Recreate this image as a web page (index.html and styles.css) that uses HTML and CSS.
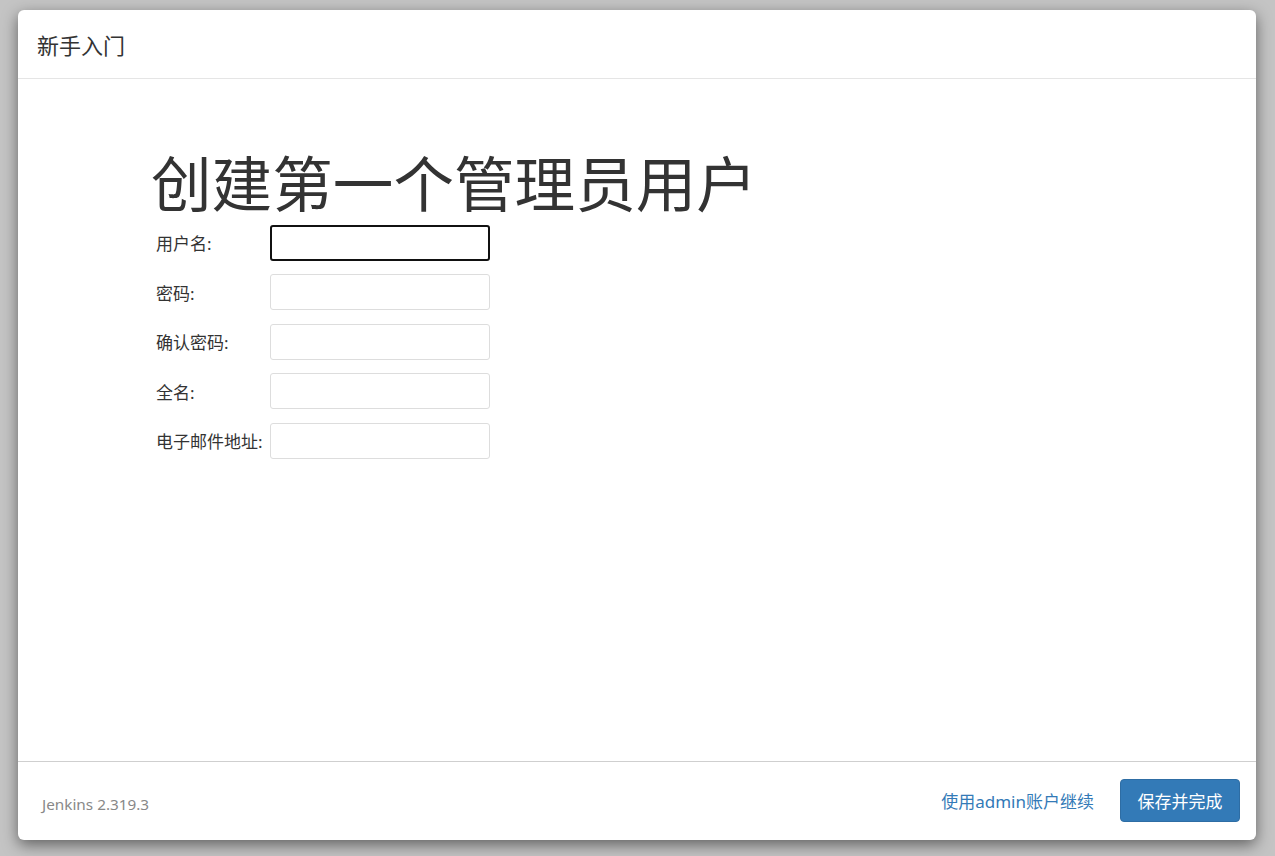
FILE: index.html
```html
<!DOCTYPE html>
<html lang="zh-CN">
<head>
    <meta charset="UTF-8">
    <title>新手入门</title>
    <link rel="stylesheet" href="styles.css">
</head>
<body>
    <div class="setup-modal">
        <div class="setup-header">
            <h4 class="setup-title">新手入门</h4>
        </div>

        <div class="setup-body">
            <h1 class="setup-heading">创建第一个管理员用户</h1>
            <form class="setup-form">
                <div class="form-row">
                    <label class="form-label">用户名:</label>
                    <input class="form-input focused" type="text">
                </div>
                <div class="form-row">
                    <label class="form-label">密码:</label>
                    <input class="form-input" type="password">
                </div>
                <div class="form-row">
                    <label class="form-label">确认密码:</label>
                    <input class="form-input" type="password">
                </div>
                <div class="form-row">
                    <label class="form-label">全名:</label>
                    <input class="form-input" type="text">
                </div>
                <div class="form-row">
                    <label class="form-label">电子邮件地址:</label>
                    <input class="form-input" type="text">
                </div>
            </form>
        </div>

        <div class="setup-footer">
            <div class="version">Jenkins 2.319.3</div>
            <div class="footer-actions">
                <a class="skip-link" href="#">使用admin账户继续</a>
                <button class="save-btn" type="button">保存并完成</button>
            </div>
        </div>
    </div>
</body>
</html>
```

FILE: styles.css
```css
* {
    box-sizing: border-box;
    margin: 0;
    padding: 0;
}

html, body {
    height: 100%;
}

body {
    background: #c4c4c4;
    font-family: "Noto Sans", "Noto Sans CJK SC", sans-serif;
    color: #333;
    padding: 10px 19px 16px 18px;
}

.setup-modal {
    height: 100%;
    background: #fff;
    border-radius: 6px;
    box-shadow: 0 5px 15px rgba(0, 0, 0, 0.5);
    display: flex;
    flex-direction: column;
}

/* Header */
.setup-header {
    height: 69px;
    border-bottom: 1px solid #e5e5e5;
    padding-left: 19px;
    display: flex;
    align-items: center;
}

.setup-title {
    font-size: 22px;
    font-weight: 400;
    color: #333;
}

/* Body */
.setup-body {
    flex: 1;
    padding: 72px 0 0 133px;
}

.setup-heading {
    font-size: 60.6px;
    font-weight: 400;
    line-height: 1.1;
    color: #333;
    margin-bottom: 7px;
}

.setup-form {
    margin-left: 5px;
    display: flex;
    flex-direction: column;
    gap: 13.5px;
}

.form-row {
    display: flex;
    align-items: center;
}

.form-label {
    width: 114px;
    font-size: 17px;
    color: #333;
    white-space: nowrap;
}

.form-input {
    width: 220px;
    height: 36px;
    border: 1px solid #ddd;
    border-radius: 3px;
    background: #fff;
    outline: none;
}

.form-input.focused {
    border: 2px solid #111;
}

/* Footer */
.setup-footer {
    height: 79px;
    border-top: 1px solid #cfcfcf;
    display: flex;
    align-items: center;
    justify-content: space-between;
    padding: 0 16px 2px 24px;
}

.version {
    font-size: 15.3px;
    color: #888;
    padding-top: 8px;
}

.footer-actions {
    display: flex;
    align-items: center;
    gap: 26px;
}

.skip-link {
    font-size: 17px;
    color: #337ab7;
    text-decoration: none;
}

.save-btn {
    width: 120px;
    height: 43px;
    background: #337ab7;
    border: 1px solid #2e6da4;
    border-radius: 4px;
    color: #fff;
    font-family: inherit;
    font-size: 17px;
}
```
